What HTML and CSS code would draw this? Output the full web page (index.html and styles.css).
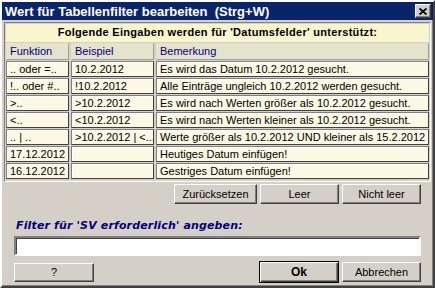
FILE: index.html
```html
<!DOCTYPE html>
<html lang="de">
<head>
    <meta charset="UTF-8">
    <title>Wert für Tabellenfilter bearbeiten</title>
    <link rel="stylesheet" href="styles.css">
</head>
<body>

    <div class="window">
        <div class="titlebar">
            <span class="title">Wert für Tabellenfilter bearbeiten&nbsp; (Strg+W)</span>
            <button class="close">
                <svg width="8" height="7" viewBox="0 0 8 7">
                    <path d="M0.5 0.5 L7.5 6.5 M7.5 0.5 L0.5 6.5" stroke="#000" stroke-width="1.8"/>
                </svg>
            </button>
        </div>

        <div class="grid">
            <div class="caption">Folgende Eingaben werden für 'Datumsfelder' unterstützt:</div>

            <div class="cell head">Funktion</div>
            <div class="cell head">Beispiel</div>
            <div class="cell head">Bemerkung</div>

            <div class="cell">.. oder =..</div>
            <div class="cell">10.2.2012</div>
            <div class="cell">Es wird das Datum 10.2.2012 gesucht.</div>

            <div class="cell">!.. oder #..</div>
            <div class="cell">!10.2.2012</div>
            <div class="cell">Alle Einträge ungleich 10.2.2012 werden gesucht.</div>

            <div class="cell">&gt;..</div>
            <div class="cell">&gt;10.2.2012</div>
            <div class="cell">Es wird nach Werten größer als 10.2.2012 gesucht.</div>

            <div class="cell">&lt;..</div>
            <div class="cell">&lt;10.2.2012</div>
            <div class="cell">Es wird nach Werten kleiner als 10.2.2012 gesucht.</div>

            <div class="cell">.. | ..</div>
            <div class="cell">&gt;10.2.2012 | &lt;...</div>
            <div class="cell">Werte größer als 10.2.2012 UND kleiner als 15.2.2012</div>

            <div class="cell">17.12.2012</div>
            <div class="cell"></div>
            <div class="cell">Heutiges Datum einfügen!</div>

            <div class="cell">16.12.2012</div>
            <div class="cell"></div>
            <div class="cell">Gestriges Datum einfügen!</div>
        </div>

        <div class="button-row">
            <button class="btn wide">Zurücksetzen</button>
            <button class="btn">Leer</button>
            <button class="btn">Nicht leer</button>
        </div>

        <label class="prompt" for="filter">Filter für 'SV erforderlich' angeben:</label>
        <input id="filter" class="filter-input" type="text">

        <div class="footer">
            <button class="btn help">?</button>
            <div class="footer-right">
                <button class="btn default">Ok</button>
                <button class="btn">Abbrechen</button>
            </div>
        </div>
    </div>

</body>
</html>
```

FILE: styles.css
```css
/* Basic reset */
* {
    margin: 0;
    padding: 0;
    box-sizing: border-box;
}

body {
    width: 435px;
    height: 288px;
    background-color: #d4d0c8;
    font-family: "Liberation Sans", Arial, sans-serif;
    font-size: 11px;
    color: #000;
}

/* Dialog frame */
.window {
    width: 435px;
    height: 288px;
    background-color: #d4d0c8;
    border: 2px solid;
    border-color: #ffffff #404040 #404040 #ffffff;
    box-shadow: inset -1px -1px 0 #808080;
    padding: 0 2px;
    display: flex;
    flex-direction: column;
}

.titlebar {
    height: 18px;
    margin: 0 -2px;
    background-color: #0a246a;
    display: flex;
    align-items: center;
    justify-content: space-between;
    padding: 0 2px 0 3px;
}

.title {
    color: #fff;
    font-weight: bold;
    font-size: 13px;
}

.close {
    width: 16px;
    height: 14px;
    background-color: #d4d0c8;
    border: 1px solid;
    border-color: #ffffff #404040 #404040 #ffffff;
    box-shadow: inset -1px -1px 0 #808080;
    display: flex;
    align-items: center;
    justify-content: center;
}

/* Info table */
.grid {
    margin-top: 2px;
    height: 160px;
    border: 1px solid;
    border-color: #808080 #ffffff #ffffff #808080;
    background-color: #d4d0c8;
    padding: 1px 1px 2px;
    display: grid;
    grid-template-columns: 63px 83px 1fr;
    grid-template-rows: 18px 17px repeat(7, 16px);
    gap: 1px 2px;
}

.caption {
    grid-column: 1 / 4;
    background-color: #f8f5cf;
    font-weight: bold;
    font-size: 11px;
    letter-spacing: 0.3px;
    text-align: center;
    line-height: 17px;
}

.cell {
    background-color: #fbf9e4;
    border: 1px solid;
    border-color: #808080 #404040 #404040 #808080;
    box-shadow: inset 1px 1px 0 #ffffff;
    padding: 0 3px;
    font-size: 11px;
    line-height: 14px;
    white-space: nowrap;
    overflow: hidden;
}

.cell.head {
    background-color: #e6e3cc;
    color: #000080;
    border-color: #e6e3cc #a0a0a0 #a0a0a0 #e6e3cc;
    box-shadow: none;
    line-height: 15px;
}

/* Buttons */
.btn {
    font-family: "Liberation Sans", Arial, sans-serif;
    font-size: 11px;
    height: 20px;
    width: 79px;
    background-color: #d4d0c8;
    border: 1px solid;
    border-color: #ffffff #404040 #404040 #ffffff;
    box-shadow: inset -1px -1px 0 #808080;
}

.btn.wide {
    width: 83px;
}

.button-row {
    display: flex;
    justify-content: flex-end;
    gap: 3px;
    margin-top: 2px;
    padding-right: 10px;
}

.prompt {
    margin: 15px 0 0 12px;
    color: #000080;
    font-family: "DejaVu Sans", sans-serif;
    font-weight: bold;
    font-style: italic;
    font-size: 11px;
    letter-spacing: 0.15px;
    height: 13px;
    line-height: 13px;
}

.filter-input {
    margin: 4px 10px 0 10px;
    height: 20px;
    border: 2px solid;
    border-color: #808080 #ffffff #ffffff #808080;
    box-shadow: inset 1px 1px 0 #404040;
    background-color: #fff;
    font-family: "Liberation Sans", Arial, sans-serif;
    font-size: 11px;
    padding: 0 3px;
    outline: none;
}

.footer {
    display: flex;
    justify-content: space-between;
    align-items: center;
    margin-top: 5px;
    padding: 0 10px;
}

.btn.help {
    width: 80px;
    height: 19px;
}

.footer-right {
    display: flex;
    gap: 3px;
    align-items: center;
}

.btn.default {
    width: 80px;
    height: 22px;
    font-weight: bold;
    font-size: 12px;
    border: 1px solid #000;
    box-shadow: inset 1px 1px 0 #ffffff, inset -1px -1px 0 #404040, inset -2px -2px 0 #808080;
}
```
